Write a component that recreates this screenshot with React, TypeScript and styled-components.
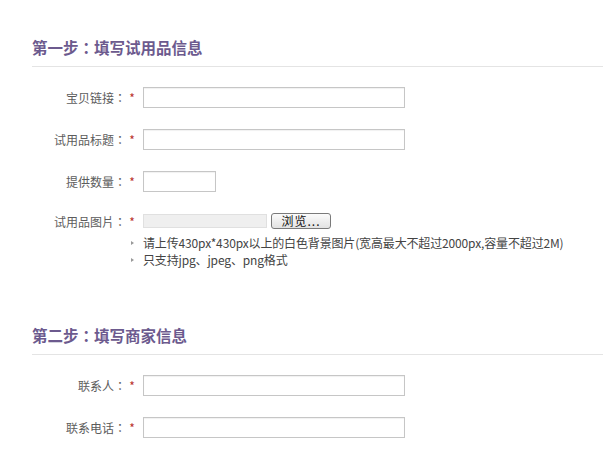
import React from "react";
import styled, { createGlobalStyle } from "styled-components";

const GlobalStyle = createGlobalStyle`
    body{
        margin:0;
        background:#fff;
        font-family:"Noto Sans CJK TC","Noto Sans CJK SC","Liberation Sans",sans-serif;
        font-size:12px;
        color:#555;
    }
`;

const Page = styled.div`
    padding-top:37px;
    width:603px;
`;

const Section = styled.div<{ $gap?: number }>`
    margin-top:${({ $gap }) => $gap || 0}px;
`;

const Title = styled.h2`
    margin:0 0 0 32px;
    padding-bottom:9px;
    border-bottom:1px solid #e4e4e4;
    font-size:15.5px;
    line-height:20px;
    font-weight:bold;
    color:#6c5a8e;
`;

const Rows = styled.div`
    display:flex;
    flex-direction:column;
    gap:21px;
    margin-top:20px;
    padding-left:32px;
`;

const Row = styled.div`
    display:flex;
    align-items:center;
    height:21px;
`;

const Label = styled.span`
    width:94px;
    text-align:right;
    color:#5c5c5c;
    white-space:nowrap;
`;

const Star = styled.span`
    width:12px;
    margin-right:5px;
    text-align:center;
    color:#b8322a;
`;

const TextInput = styled.input<{ $width: number }>`
    box-sizing:border-box;
    width:${({ $width }) => $width}px;
    height:21px;
    margin:0;
    padding:0 4px;
    border:1px solid #c6c6c6;
    box-shadow:inset 0 1px 1px rgba(0,0,0,0.06);
    outline:none;
    font:inherit;
`;

const FileRow = styled(Row)`
    height:16px;
`;

const FileField = styled.div`
    box-sizing:border-box;
    width:124px;
    height:14px;
    background:#efefef;
    border:1px solid #e0e0e0;
`;

const BrowseButton = styled.button`
    box-sizing:border-box;
    width:60px;
    height:16px;
    margin-left:4px;
    padding:0;
    border:1px solid #7a7a7a;
    border-radius:3px;
    background:linear-gradient(#fbfbfb,#e2e2e2);
    font:inherit;
    font-size:12px;
    line-height:14px;
    color:#111;
    letter-spacing:1px;
`;

const Hints = styled.ul`
    list-style:none;
    margin:5px 0 0 131px;
    padding:0;
`;

const Hint = styled.li`
    display:flex;
    align-items:center;
    line-height:17px;
    color:#444;
    white-space:nowrap;
    letter-spacing:-0.15px;
    font-family:"Noto Sans CJK SC","Liberation Sans",sans-serif;
    &::before{
        content:"";
        width:0;
        height:0;
        margin-right:9px;
        border-top:2.5px solid transparent;
        border-bottom:2.5px solid transparent;
        border-left:3px solid #999;
    }
`;

type Field = { label: string; width: number };

const step1: Field[] = [
    { label: "宝贝链接：", width: 262 },
    { label: "试用品标题：", width: 262 },
    { label: "提供数量：", width: 73 },
];

const step2: Field[] = [
    { label: "联系人：", width: 262 },
    { label: "联系电话：", width: 262 },
];

function FieldRow({ label, width }: Field) {
    return <Row>
        <Label>{label}</Label>
        <Star>*</Star>
        <TextInput $width={width} />
    </Row>;
}

export default function App() {
    return <Page>
        <GlobalStyle />
        <Section>
            <Title>第一步：填写试用品信息</Title>
            <Rows>
                {step1.map(f => <FieldRow key={f.label} {...f} />)}
                <div>
                    <FileRow>
                        <Label>试用品图片：</Label>
                        <Star>*</Star>
                        <FileField />
                        <BrowseButton>浏览...</BrowseButton>
                    </FileRow>
                </div>
            </Rows>
            <Hints>
                <Hint>请上传430px*430px以上的白色背景图片(宽高最大不超过2000px,容量不超过2M)</Hint>
                <Hint>只支持jpg、jpeg、png格式</Hint>
            </Hints>
        </Section>
        <Section $gap={57}>
            <Title>第二步：填写商家信息</Title>
            <Rows>
                {step2.map(f => <FieldRow key={f.label} {...f} />)}
            </Rows>
        </Section>
    </Page>;
}
